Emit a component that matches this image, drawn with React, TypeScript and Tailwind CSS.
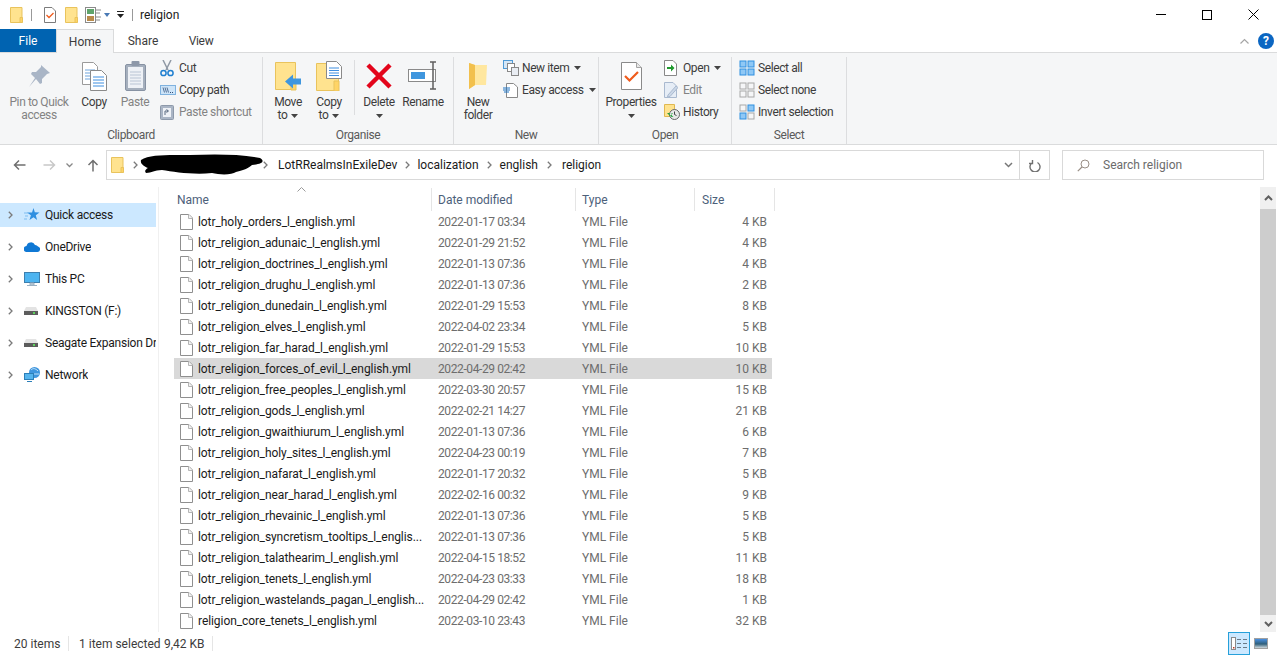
import React from "react"

const files = [
  ["lotr_holy_orders_l_english.yml", "2022-01-17 03:34", "4 KB"],
  ["lotr_religion_adunaic_l_english.yml", "2022-01-29 21:52", "4 KB"],
  ["lotr_religion_doctrines_l_english.yml", "2022-01-13 07:36", "4 KB"],
  ["lotr_religion_drughu_l_english.yml", "2022-01-13 07:36", "2 KB"],
  ["lotr_religion_dunedain_l_english.yml", "2022-01-29 15:53", "8 KB"],
  ["lotr_religion_elves_l_english.yml", "2022-04-02 23:34", "5 KB"],
  ["lotr_religion_far_harad_l_english.yml", "2022-01-29 15:53", "10 KB"],
  ["lotr_religion_forces_of_evil_l_english.yml", "2022-04-29 02:42", "10 KB"],
  ["lotr_religion_free_peoples_l_english.yml", "2022-03-30 20:57", "15 KB"],
  ["lotr_religion_gods_l_english.yml", "2022-02-21 14:27", "21 KB"],
  ["lotr_religion_gwaithiurum_l_english.yml", "2022-01-13 07:36", "6 KB"],
  ["lotr_religion_holy_sites_l_english.yml", "2022-04-23 00:19", "7 KB"],
  ["lotr_religion_nafarat_l_english.yml", "2022-01-17 20:32", "5 KB"],
  ["lotr_religion_near_harad_l_english.yml", "2022-02-16 00:32", "9 KB"],
  ["lotr_religion_rhevainic_l_english.yml", "2022-01-13 07:36", "5 KB"],
  ["lotr_religion_syncretism_tooltips_l_englis...", "2022-01-13 07:36", "5 KB"],
  ["lotr_religion_talathearim_l_english.yml", "2022-04-15 18:52", "11 KB"],
  ["lotr_religion_tenets_l_english.yml", "2022-04-23 03:33", "18 KB"],
  ["lotr_religion_wastelands_pagan_l_english...", "2022-04-29 02:42", "1 KB"],
  ["religion_core_tenets_l_english.yml", "2022-03-10 23:43", "32 KB"],
]

/* ---- small drawings ---- */

const Folder = ({ w = 13, h = 16 }: { w?: number; h?: number }) => (
  <svg width={w} height={h} viewBox="0 0 13 16" className="shrink-0">
    <path d="M.5.5h11.500v15H.5z" fill="#ffe38f" stroke="#e9c35c" />
    <path d="M10 10.500h2.500v5H10z" fill="#ffd466" stroke="#e9c35c" />
  </svg>
)

const Caret = () => (
  <svg width="7" height="4" viewBox="0 0 7 4" className="shrink-0">
    <path d="M0 0h7L3.500 4z" fill="#444" />
  </svg>
)

const FileIcon = () => (
  <svg width="13" height="16" viewBox="0 0 13 16" className="shrink-0">
    <path d="M.5.5H9L12.500 4v11.500H.5z" fill="#fff" stroke="#8f8f8f" />
    <path d="M8.500.5v4h4" fill="#f1f1f1" stroke="#b5b5b5" />
  </svg>
)

const Chevron = ({ cls = "mx-[8px]" }: { cls?: string }) => (
  <svg width="5" height="8" viewBox="0 0 5 8" className={`shrink-0 ${cls}`}>
    <path d="M.8.8 4 4 .8 7.200" fill="none" stroke="#7a7a7a" strokeWidth="1.300" />
  </svg>
)

const PinIcon = () => (
  <svg width="24" height="24" viewBox="0 0 24 24">
    <path d="M14 1l9 8-3 1-5 5 0 4-2 1-4-5-7 8 6-9-4-4 1-2 4 0 5-5z" fill="#a9b5c6" />
  </svg>
)

const CopyIcon = () => (
  <svg width="25" height="29" viewBox="0 0 25 29">
    <path d="M.5.5h11l4 4v18H.5z" fill="#fff" stroke="#9a9a9a" />
    <path d="M3 8h10M3 11h10M3 14h10M3 17h10" stroke="#6fa5dd" />
    <path d="M8.500 8.500h11l5 5v15h-16z" fill="#fff" stroke="#8a8a8a" />
    <path d="M11 15h11M11 18h11M11 21h11M11 24h11" stroke="#3f8fe0" />
  </svg>
)

const PasteIcon = () => (
  <svg width="21" height="30" viewBox="0 0 21 30">
    <rect x=".5" y="3.500" width="20" height="26" rx="1.500" fill="#a5afbd" stroke="#8792a3" />
    <rect x="3" y="6" width="15" height="21" fill="#eef1f6" />
    <path d="M5 11h11M5 14h11M5 17h11M5 20h11M5 23h11" stroke="#b9c4d4" />
    <rect x="6.500" y="0" width="8" height="5" rx="1" fill="#8d98a9" />
  </svg>
)

const Scissors = () => (
  <svg width="14" height="17" viewBox="0 0 14 17">
    <path d="M3 0l5 10M11 0L6 10" stroke="#9099a5" strokeWidth="1.500" fill="none" />
    <circle cx="3.500" cy="13" r="2.600" fill="none" stroke="#1f7fd0" strokeWidth="1.500" />
    <circle cx="10.500" cy="13" r="2.600" fill="none" stroke="#1f7fd0" strokeWidth="1.500" />
  </svg>
)

const CopyPathIcon = () => (
  <svg width="16" height="10" viewBox="0 0 16 10">
    <rect x=".5" y=".5" width="15" height="9" fill="#cde4f8" stroke="#7fb2df" />
    <path d="M3 2.500l1.500 5M5 2.500l1.500 5M7 2.500l1.500 5" stroke="#34507a" strokeWidth=".8" />
    <path d="M10 7.500h1M12 7.500h1" stroke="#34507a" />
  </svg>
)

const ShortcutIcon = () => (
  <svg width="14" height="16" viewBox="0 0 14 16">
    <rect x=".5" y="1.500" width="13" height="14" rx="1" fill="#aab5c5" stroke="#8d99aa" />
    <rect x="3" y="4" width="8" height="9" fill="#eef1f6" />
    <path d="M5 11V7h3M6.500 5.500 8.500 7l-2 1.500" stroke="#5a6a80" fill="none" />
  </svg>
)

const MoveIcon = () => (
  <svg width="26" height="29" viewBox="0 0 26 29">
    <path d="M.5.500h20v27H.5z" fill="#ffe38f" stroke="#e9c35c" />
    <path d="M16 18h5v10h-5z" fill="#ffd466" stroke="#e9c35c" />
    <path d="M10 21.500l8-7v4h8v6h-8v4z" fill="#3f96de" transform="translate(0 -2)" />
  </svg>
)

const CopyToIcon = () => (
  <svg width="26" height="30" viewBox="0 0 26 30">
    <path d="M.5 2.500h22v27H.5z" fill="#ffe38f" stroke="#e9c35c" />
    <path d="M18 20h5v10h-5z" fill="#ffd466" stroke="#e9c35c" />
    <path d="M10.500.5h10l5 5v12h-15z" fill="#fff" stroke="#8a8a8a" />
    <path d="M13 7h10M13 9.500h10M13 12h10M13 14.500h10" stroke="#3f8fe0" />
  </svg>
)

const DeleteIcon = () => (
  <svg width="26" height="26" viewBox="0 0 26 26">
    <path d="M2 2l22 22M24 2L2 24" stroke="#e3051b" strokeWidth="4.500" />
  </svg>
)

const RenameIcon = () => (
  <svg width="30" height="30" viewBox="0 0 30 30">
    <rect x=".5" y="8.500" width="27" height="12" fill="#fff" stroke="#8a8a8a" />
    <rect x="3" y="11" width="14" height="7" fill="#3f96de" />
    <path d="M22 1h6M25 1v27M22 28h6" stroke="#5f5f5f" strokeWidth="1.500" fill="none" />
  </svg>
)

const NewFolderIcon = () => (
  <svg width="20" height="28" viewBox="0 0 20 28">
    <path d="M1 1l6 2h7v20H7l-6 4z" fill="#fbd774" />
    <path d="M7 3h12l-1 20H7z" fill="#ffe79f" />
    <path d="M1 1l6 2v20l-6 4z" fill="#f2c04d" />
  </svg>
)

const NewItemIcon = () => (
  <svg width="16" height="16" viewBox="0 0 16 16">
    <rect x=".5" y=".5" width="9" height="8" fill="#d5e7f7" stroke="#4f9ad6" />
    <rect x="4.500" y="3.500" width="7" height="8" fill="#fff" stroke="#888" />
    <rect x="8.500" y="7.500" width="7" height="8" fill="#e9edf3" stroke="#888" />
  </svg>
)

const EasyAccessIcon = () => (
  <svg width="15" height="16" viewBox="0 0 15 16">
    <path d="M3.500 1.500h7l4 3.500v10.500h-11z" fill="#fff" stroke="#888" />
    <path d="M0 6h7M0 8h7M1 10h5" stroke="#1f74c4" />
  </svg>
)

const PropertiesIcon = () => (
  <svg width="21" height="28" viewBox="0 0 21 28">
    <path d="M.5.5h15l5 5v22H.5z" fill="#fff" stroke="#8a8a8a" />
    <path d="M15.500.5v5h5" fill="#e8e8e8" stroke="#a5a5a5" />
    <path d="M4 14l4.500 4.500L17 10" fill="none" stroke="#ef5b1c" strokeWidth="2.200" />
  </svg>
)

const OpenIcon = () => (
  <svg width="13" height="16" viewBox="0 0 13 16">
    <path d="M.5.5H9L12.500 4v11.500H.5z" fill="#fff" stroke="#888" />
    <path d="M3 7h4V4.500L10.500 8 7 11.500V9H3z" fill="#1f9a2e" />
  </svg>
)

const EditIcon = () => (
  <svg width="14" height="16" viewBox="0 0 14 16">
    <path d="M.5.5H9l3.500 3.500v11.500H.5z" fill="#e6edf6" stroke="#a9b9cf" />
    <path d="M4 13l8-9 2 1.500-8 9-2.500.5z" fill="#ccd8e8" stroke="#a9b9cf" />
  </svg>
)

const HistoryIcon = () => (
  <svg width="16" height="16" viewBox="0 0 16 16">
    <path d="M.5.5h10v12H.5z" fill="#ffe38f" stroke="#e0b850" />
    <circle cx="10.500" cy="10.500" r="5" fill="#e8e8e8" stroke="#666" />
    <path d="M10.500 7.500v3l2 1" stroke="#444" fill="none" />
    <path d="M3 9l3 3 3-3H7.500c0 2 .5 3 2 4-3 .5-4-2-4-4z" fill="#22a03a" />
  </svg>
)

const SelectGrid = ({ tl, tr, bl, br }: { tl: boolean; tr: boolean; bl: boolean; br: boolean }) => {
  const cell = (x: number, y: number, on: boolean) => (
    <rect
      x={x + 0.5}
      y={y + 0.5}
      width="6"
      height="6"
      fill={on ? "#8fc8f5" : "#f5f6f7"}
      stroke={on ? "#2f8fe0" : "#a8a8a8"}
    />
  )
  return (
    <svg width="16" height="16" viewBox="0 0 16 16">
      {cell(0.5, 0.5, tl)}
      {cell(8.5, 0.5, tr)}
      {cell(0.5, 8.5, bl)}
      {cell(8.5, 8.5, br)}
    </svg>
  )
}

const QuickAccessIcon = () => (
  <svg width="16" height="14" viewBox="0 0 16 14">
    <path d="M9.500 0l1.300 4.300 4.700.1-3.700 2.800 1.300 4.700-3.600-2.700-4 2.800 1.400-4.800L3 4.500l5 0z" fill="#2f8fe0" />
    <path d="M0 5h4M1 8h3M0 11h3" stroke="#7fbdf0" />
  </svg>
)

const OneDriveIcon = () => (
  <svg width="16" height="10" viewBox="0 0 16 10">
    <path d="M3 10a3 3 0 0 1-.5-6A4.500 4.500 0 0 1 11 3a3.500 3.500 0 0 1 3 1.500A2.800 2.800 0 0 1 13.500 10z" fill="#0f78d4" />
  </svg>
)

const PcIcon = () => (
  <svg width="16" height="15" viewBox="0 0 16 15">
    <rect x=".5" y=".5" width="15" height="10" fill="#4db4f0" stroke="#3d7fae" />
    <path d="M6 11h4v2H6zM3 13.500h10" stroke="#9ab0c2" fill="#c6d4de" />
  </svg>
)

const DriveIcon = () => (
  <svg width="14" height="8" viewBox="0 0 14 8">
    <path d="M2 0h10l2 4H0z" fill="#e3e3e3" />
    <rect y="4" width="14" height="4" fill="#5c5c5c" />
    <rect x="9" y="5" width="2" height="2" fill="#5fd35f" />
  </svg>
)

const NetworkIcon = () => (
  <svg width="17" height="16" viewBox="0 0 17 16">
    <circle cx="10.500" cy="5.500" r="5.500" fill="#3f96de" />
    <path d="M7 3c2-2 4-2 7 1M6 7h9" stroke="#bfe0f7" fill="none" />
    <rect x=".5" y="6.500" width="9" height="6" fill="#55b5ee" stroke="#2c7fb8" />
    <path d="M3 14.500h5" stroke="#2c7fb8" />
  </svg>
)

/* ---- ribbon pieces ---- */

const BigButton = ({
  w,
  icon,
  lines,
  arrow,
  off,
}: {
  w: string
  icon: React.ReactNode
  lines: string[]
  arrow?: boolean
  off?: boolean
}) => (
  <div className={`${w} shrink-0 flex flex-col items-center mt-px ${off ? "text-[#838383]" : "text-[#3c3c3c]"}`}>
    <div className="h-[36px] mb-[2px] flex items-center justify-center">{icon}</div>
    {lines.map((l, i) => (
      <div key={i} className="leading-[13px] whitespace-nowrap flex items-center gap-[4px]">
        {l}
        {arrow && i === lines.length - 1 && lines.length > 1 && <Caret />}
      </div>
    ))}
    {arrow && lines.length === 1 && (
      <div className="h-[13px] flex items-center">
        <Caret />
      </div>
    )}
  </div>
)

const SmallButton = ({
  icon,
  label,
  arrow,
  off,
}: {
  icon: React.ReactNode
  label: string
  arrow?: boolean
  off?: boolean
}) => (
  <div className={`h-[22px] flex items-center whitespace-nowrap ${off ? "text-[#838383]" : "text-[#3c3c3c]"}`}>
    <div className="w-[19px] flex items-center justify-start">{icon}</div>
    <span>{label}</span>
    {arrow && (
      <span className="ml-[5px]">
        <Caret />
      </span>
    )}
  </div>
)

const Group = ({ w, label, children }: { w: string; label: string; children: React.ReactNode }) => (
  <div className={`${w} shrink-0 h-full flex flex-col border-r border-[#dcdddf]`}>
    <div className="flex-1 flex min-h-0">{children}</div>
    <div className="h-[20px] text-center leading-[22px] text-[#5a5a5a]">{label}</div>
  </div>
)

const NavItem = ({ icon, label, active }: { icon: React.ReactNode; label: string; active?: boolean }) => (
  <div className={`h-[24px] flex items-center mb-[8px] w-[156px] ${active ? "bg-[#cce8ff]" : ""}`}>
    <Chevron cls="ml-[8px]" />
    <div className="w-[32px] pl-[11px] h-full flex items-center justify-start shrink-0">{icon}</div>
    <span className="whitespace-nowrap overflow-hidden text-[#1a1a1a] tracking-[-0.25px]">{label}</span>
  </div>
)

export default function App() {
  return (
    <div className="w-[1277px] h-[655px] overflow-hidden bg-white flex flex-col text-[12px] text-[#1a1a1a] font-['Roboto',sans-serif]">
      {/* Title bar */}
      <div className="h-[29px] shrink-0 flex items-center pl-[10px]">
        <Folder />
        <div className="w-px h-[12px] bg-[#999] ml-[8px] mr-[12px]" />
        <svg width="12" height="16" viewBox="0 0 12 16" className="shrink-0">
          <path d="M.5.5H8L11.500 4v11.500H.5z" fill="#fff" stroke="#7c7c7c" />
          <path d="M2.500 8l2.500 2.500L9.500 6" stroke="#ef5b1c" strokeWidth="1.300" fill="none" />
        </svg>
        <div className="w-[9px]" />
        <Folder />
        <svg width="16" height="16" viewBox="0 0 16 16" className="shrink-0 ml-[7px]">
          <rect x=".5" y=".5" width="10" height="15" fill="#fff" stroke="#8a8a8a" />
          <rect x="2" y="2" width="7" height="5" fill="#5fa36a" />
          <rect x="2" y="9" width="7" height="5" fill="#b98a4a" />
          <path d="M11 3h5M11 6h4M11 10h5M11 13h4" stroke="#8a8a8a" />
        </svg>
        <svg width="6" height="4" viewBox="0 0 6 4" className="shrink-0 ml-[3px]">
          <path d="M0 0h6L3 4z" fill="#4a7ab5" />
        </svg>
        <svg width="7" height="7" viewBox="0 0 7 7" className="shrink-0 ml-[7px]">
          <path d="M0 0h7v1H0zM0 3h7L3.500 7z" fill="#222" />
        </svg>
        <div className="w-px h-[12px] bg-[#999] ml-[8px] mr-[7px]" />
        <span className="text-[#1a1a1a]">religion</span>
        <div className="ml-auto flex items-center mr-px">
          <div className="w-[46px] flex justify-center">
            <div className="w-[10px] h-px bg-black" />
          </div>
          <div className="w-[46px] flex justify-center">
            <div className="w-[10px] h-[10px] border border-black" />
          </div>
          <div className="w-[46px] flex justify-center">
            <svg width="11" height="11" viewBox="0 0 11 11">
              <path d="M.5.5l10 10M10.500.5l-10 10" stroke="#000" strokeWidth="1" />
            </svg>
          </div>
        </div>
      </div>

      {/* Tabs */}
      <div className="h-[24px] shrink-0 flex items-stretch border-b border-[#dadbdc] relative">
        <div className="w-[56px] bg-[#0063b1] text-white flex items-center justify-center">File</div>
        <div className="w-[58px] h-[24px] bg-[#f5f6f7] border border-b-0 border-[#dadbdc] flex items-center justify-center text-[#3c3c3c]">
          Home
        </div>
        <div className="w-[58px] flex items-center justify-center text-[#3c3c3c]">Share</div>
        <div className="w-[58px] flex items-center justify-center text-[#3c3c3c] tracking-[-0.3px]">View</div>
        <div className="ml-auto flex items-center pr-[3px]">
          <svg width="9" height="6" viewBox="0 0 9 6" className="mr-[9px]">
            <path d="M.5 5.500l4-4 4 4" fill="none" stroke="#a5a5a5" strokeWidth="1.200" />
          </svg>
          <div className="w-[16px] h-[16px] rounded-full bg-[#0b66c2] text-white font-bold text-[12px] flex items-center justify-center">
            ?
          </div>
        </div>
      </div>

      {/* Ribbon */}
      <div className="h-[92px] shrink-0 bg-[#f5f6f7] border-b border-[#dadbdc] flex pt-[4px] tracking-[-0.4px]">
        <Group w="w-[263px]" label="Clipboard">
          <BigButton w="w-[78px]" icon={<PinIcon />} lines={["Pin to Quick", "access"]} off />
          <BigButton w="w-[32px]" icon={<CopyIcon />} lines={["Copy"]} />
          <BigButton w="w-[50px]" icon={<PasteIcon />} lines={["Paste"]} off />
          <div className="flex flex-col">
            <SmallButton icon={<Scissors />} label="Cut" />
            <SmallButton icon={<CopyPathIcon />} label="Copy path" />
            <SmallButton icon={<ShortcutIcon />} label="Paste shortcut" off />
          </div>
        </Group>
        <Group w="w-[191px]" label="Organise">
          <BigButton w="w-[50px]" icon={<MoveIcon />} lines={["Move", "to"]} arrow />
          <BigButton w="w-[32px]" icon={<CopyToIcon />} lines={["Copy", "to"]} arrow />
          <div className="w-[10px] h-[55px] mt-[3px] border-r border-[#dcdddf] shrink-0" />
          <BigButton w="w-[48px]" icon={<DeleteIcon />} lines={["Delete"]} arrow />
          <BigButton w="w-[40px]" icon={<RenameIcon />} lines={["Rename"]} />
        </Group>
        <Group w="w-[145px]" label="New">
          <BigButton w="w-[48px]" icon={<NewFolderIcon />} lines={["New", "folder"]} />
          <div className="flex flex-col pl-[1px]">
            <SmallButton icon={<NewItemIcon />} label="New item" arrow />
            <SmallButton icon={<EasyAccessIcon />} label="Easy access" arrow />
          </div>
        </Group>
        <Group w="w-[133px]" label="Open">
          <BigButton w="w-[64px]" icon={<PropertiesIcon />} lines={["Properties"]} arrow />
          <div className="flex flex-col pl-[1px]">
            <SmallButton icon={<OpenIcon />} label="Open" arrow />
            <SmallButton icon={<EditIcon />} label="Edit" off />
            <SmallButton icon={<HistoryIcon />} label="History" />
          </div>
        </Group>
        <Group w="w-[115px]" label="Select">
          <div className="flex flex-col pl-[7px]">
            <SmallButton icon={<SelectGrid tl tr bl br />} label="Select all" />
            <SmallButton icon={<SelectGrid tl={false} tr={false} bl={false} br={false} />} label="Select none" />
            <SmallButton icon={<SelectGrid tl={false} tr bl br={false} />} label="Invert selection" />
          </div>
        </Group>
      </div>

      {/* Address row */}
      <div className="h-[30px] mt-[5px] shrink-0 flex items-stretch">
        <div className="w-[106px] shrink-0 flex items-center pl-[13px]">
          <svg width="13" height="12" viewBox="0 0 13 12">
            <path d="M12.500 6H1.500M6 1.500 1.500 6 6 10.500" fill="none" stroke="#6f6f6f" strokeWidth="1.500" />
          </svg>
          <svg width="13" height="12" viewBox="0 0 13 12" className="ml-[17px]">
            <path d="M.5 6h11M7 1.500 11.500 6 7 10.500" fill="none" stroke="#c8c8c8" strokeWidth="1.500" />
          </svg>
          <svg width="7" height="5" viewBox="0 0 7 5" className="ml-[10px]">
            <path d="M.5.5l3 3 3-3" fill="none" stroke="#888" strokeWidth="1.300" />
          </svg>
          <svg width="12" height="13" viewBox="0 0 12 13" className="ml-[14px]">
            <path d="M6 12.500V1.500M1.500 6 6 1.500 10.500 6" fill="none" stroke="#6f6f6f" strokeWidth="1.500" />
          </svg>
        </div>
        <div className="w-[944px] shrink-0 border border-[#d9d9d9] flex items-center pl-[4px]">
          <Folder w={13} h={16} />
          <Chevron cls="ml-[9px] mr-[2px]" />
          {/* scribbled out part of the path */}
          <svg width="124" height="27" viewBox="0 0 124 27" className="shrink-0">
            <path
              d="M1 8C10 2 30 3 50 3c25-1 50-1 70 3 5 3 3 6-8 7-3 3-8 5-16 7-4 3-16 3-24 1-18 2-38-1-50-3-8 0-10 3-16 3-2-2 0-4 2-5C4 14 0 12 1 8z"
              fill="#000"
            />
          </svg>
          <Chevron cls="ml-[-1px] mr-[10px]" />
          <span>LotRRealmsInExileDev</span>
          <Chevron cls="ml-[8px] mr-[7px]" />
          <span>localization</span>
          <Chevron />
          <span>english</span>
          <Chevron cls="ml-[9px] mr-[10px]" />
          <span>religion</span>
          <div className="ml-auto h-full flex items-center">
            <svg width="9" height="6" viewBox="0 0 9 6" className="mr-[6px]">
              <path d="M1 1l3.500 3.500L8 1" fill="none" stroke="#777" strokeWidth="1.500" />
            </svg>
            <div className="w-[30px] h-full border-l border-[#d9d9d9] flex items-center justify-center">
              <svg width="12" height="13" viewBox="0 0 12 13">
                <path d="M3.500 3a5 5 0 1 0 5 0M3.500 .5v3.500H0" fill="none" stroke="#707070" strokeWidth="1.400" transform="translate(0 .5)" />
              </svg>
            </div>
          </div>
        </div>
        <div className="w-[202px] ml-[12px] shrink-0 border border-[#d9d9d9] flex items-center pl-[14px] text-[#6b6b6b]">
          <svg width="13" height="13" viewBox="0 0 13 13">
            <circle cx="8" cy="5" r="4" fill="none" stroke="#9a8f86" />
            <path d="M5 8 .8 12.200" stroke="#9a8f86" strokeWidth="1.200" />
          </svg>
          <span className="ml-[13px]">Search religion</span>
        </div>
      </div>

      {/* Body */}
      <div className="flex-1 min-h-0 flex mt-[7px]">
        <div className="w-[159px] shrink-0 border-r border-[#f0f0f0] pt-[16px]">
          <NavItem active icon={<QuickAccessIcon />} label="Quick access" />
          <NavItem icon={<OneDriveIcon />} label="OneDrive" />
          <NavItem icon={<PcIcon />} label="This PC" />
          <NavItem icon={<DriveIcon />} label="KINGSTON (F:)" />
          <NavItem icon={<DriveIcon />} label="Seagate Expansion Dr" />
          <NavItem icon={<NetworkIcon />} label="Network" />
        </div>

        <div className="flex-1 min-w-0 pl-[15px] relative">
          <svg width="9" height="5" viewBox="0 0 9 5" className="absolute left-[138px] top-0">
            <path d="M.5 4.500l4-4 4 4" fill="none" stroke="#9a9a9a" />
          </svg>
          <div className="h-[24px] flex items-stretch text-[#4c607a] pt-px">
            <div className="w-[258px] pl-[3px] border-r border-[#e5e5e5] flex items-center">Name</div>
            <div className="w-[144px] pl-[6px] border-r border-[#e5e5e5] flex items-center">Date modified</div>
            <div className="w-[119px] pl-[6px] border-r border-[#e5e5e5] flex items-center">Type</div>
            <div className="w-[80px] pl-[7px] border-r border-[#e5e5e5] flex items-center">Size</div>
          </div>
          {files.map(([name, date, size]) => (
            <div
              key={name}
              className={`w-[598px] h-[21px] flex items-center text-[#6d6d6d] ${
                name.includes("forces_of_evil") ? "bg-[#d9d9d9]" : ""
              }`}
            >
              <div className="w-[258px] pl-[6px] flex items-center gap-[5px] text-[#1a1a1a] tracking-[-0.07px]">
                <FileIcon />
                <span className="whitespace-nowrap">{name}</span>
              </div>
              <div className="w-[144px] pl-[6px] tracking-[-0.4px]">{date}</div>
              <div className="w-[119px] pl-[6px]">YML File</div>
              <div className="w-[72px] text-right">{size}</div>
            </div>
          ))}
        </div>

        {/* Scrollbar */}
        <div className="w-[16px] h-[445px] mr-px shrink-0 flex flex-col bg-[#f0f0f0]">
          <div className="h-[22px] flex items-center justify-center">
            <svg width="9" height="6" viewBox="0 0 9 6">
              <path d="M1 5l3.500-3.500L8 5" fill="none" stroke="#606060" strokeWidth="2" />
            </svg>
          </div>
          <div className="flex-1 bg-[#cdcdcd]" />
          <div className="h-[17px] flex items-center justify-center">
            <svg width="9" height="6" viewBox="0 0 9 6">
              <path d="M1 1l3.500 3.500L8 1" fill="none" stroke="#606060" strokeWidth="2" />
            </svg>
          </div>
        </div>
      </div>

      {/* Status bar */}
      <div className="h-[23px] shrink-0 flex items-center text-[#3c3c3c]">
        <span className="ml-[14px] w-[54px]">20 items</span>
        <div className="w-px h-[15px] bg-[#e5e5e5]" />
        <span className="ml-[10px] w-[85px]">1 item selected</span>
        <span className="w-[48px]">9,42 KB</span>
        <div className="w-px h-[15px] bg-[#e5e5e5]" />
        <div className="ml-auto flex items-center mr-[9px]">
          <div className="w-[22px] h-[23px] bg-[#cce8ff] border border-[#26a0da] flex items-center justify-center">
            <svg width="16" height="13" viewBox="0 0 16 13">
              <rect x=".5" y=".5" width="4" height="12" fill="#fff" stroke="#8a8a8a" />
              <path d="M6 2.500h4M12 2.500h4M6 6.500h4M12 6.500h4M6 10.500h4M12 10.500h4" stroke="#6a7a88" />
              <rect x="2" y="10" width="1.500" height="1.500" fill="#c0392b" />
            </svg>
          </div>
          <div className="w-[14px] h-[11px] ml-[4px] border border-[#a0a0a0] bg-[linear-gradient(#4a90e2,#2f5f7a_55%,#cfd8dc)]" />
        </div>
      </div>
    </div>
  )
}
